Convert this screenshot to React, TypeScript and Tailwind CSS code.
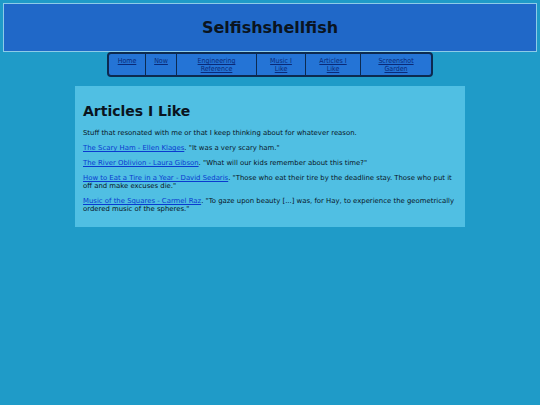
const navItems = [
  ["Home"],
  ["Now"],
  ["Engineering", "Reference"],
  ["Music I", "Like"],
  ["Articles I", "Like"],
  ["Screenshot", "Garden"],
];

const navWidths = ["w-[36px]", "w-[31px]", "w-[80px]", "w-[49px]", "w-[55px]", "w-[71px]"];

const articles = [
  { title: "The Scary Ham - Ellen Klages", quote: '"It was a very scary ham."' },
  { title: "The River Oblivion - Laura Gibson", quote: '"What will our kids remember about this time?"' },
  {
    title: "How to Eat a Tire in a Year - David Sedaris",
    quote: '"Those who eat their tire by the deadline stay. Those who put it off and make excuses die."',
  },
  {
    title: "Music of the Squares - Carmel Raz",
    quote: '"To gaze upon beauty [...] was, for Hay, to experience the geometrically ordered music of the spheres."',
  },
];

export default function App() {
  return (
    <div className="min-h-[405px] w-[540px] bg-[#1f9bc8] pt-[3px] font-['DejaVu_Sans',Verdana,sans-serif] text-[#08141f]">
      {/* Header */}
      <div className="mx-[3px] flex h-[49px] items-center justify-center border border-[#8ccbe8] bg-[#2068c8]">
        <h1 className="text-[16px] font-bold leading-[20px] text-[#0a1420]">Selfishshellfish</h1>
      </div>

      {/* Nav */}
      <div className="flex justify-center">
        <div className="flex h-[25px] overflow-hidden rounded-[4px] border-2 border-[#0c2a50] bg-[#2474d6]">
          {navItems.map((lines, i) => (
            <a
              key={i}
              href="#"
              className={`flex ${navWidths[i]} flex-col items-center pt-[3px] text-center font-['DejaVu_Sans_Condensed',sans-serif] text-[7px] leading-[8px] text-[#0a2a78] underline ${
                i > 0 ? "border-l border-[#0c2a50]" : ""
              }`}
            >
              {lines.map((l) => (
                <span key={l}>{l}</span>
              ))}
            </a>
          ))}
        </div>
      </div>

      {/* Main */}
      <div className="mx-auto mt-[9px] w-[390px] bg-[#50bfe3] px-[8px] pb-[7px] pt-[17px]">
        <h2 className="mb-[9px] text-[14px] font-bold leading-[17px] text-[#0a1420]">Articles I Like</h2>
        <p className="mb-[7px] text-[6.9px] leading-[8px]">
          Stuff that resonated with me or that I keep thinking about for whatever reason.
        </p>
        {articles.map((a) => (
          <p key={a.title} className="mb-[7px] text-[6.9px] leading-[8px]">
            <a href="#" className="text-[#0a3ad0] underline">
              {a.title}
            </a>
            . {a.quote}
          </p>
        ))}
      </div>
    </div>
  );
}
